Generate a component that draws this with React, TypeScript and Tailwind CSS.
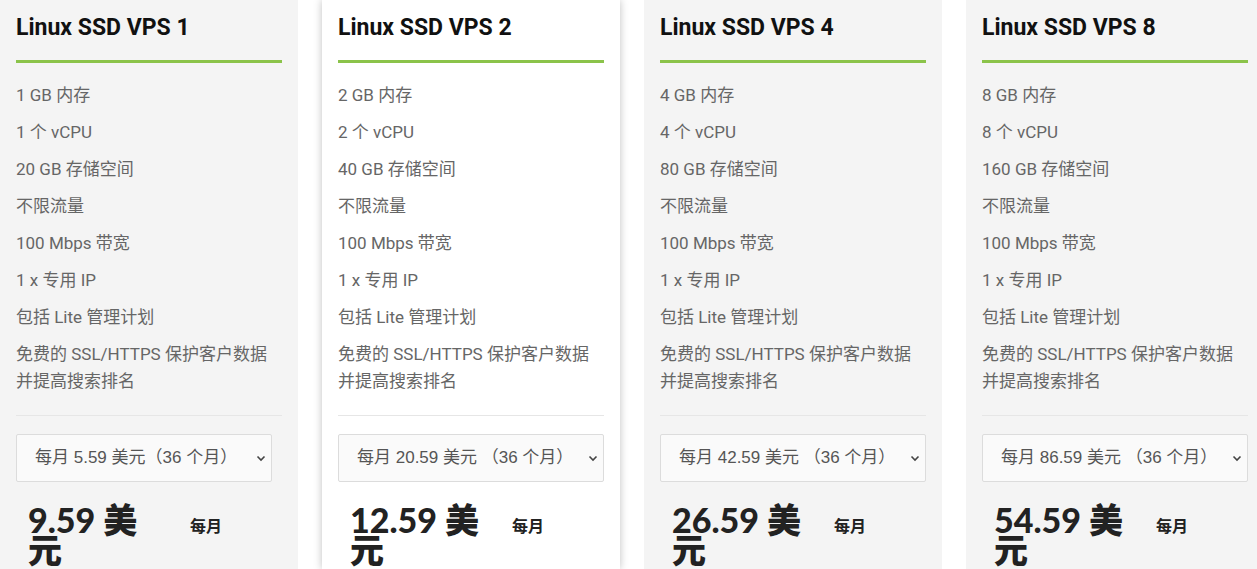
import React from 'react';

interface Plan {
  name: string;
  ram: string;
  cpu: string;
  disk: string;
  term: string;
  termWidth: string;
  price: string;
  featured?: boolean;
}

const plans: Plan[] = [
  { name: 'Linux SSD VPS 1', ram: '1', cpu: '1', disk: '20', term: '每月 5.59 美元（36 个月）', termWidth: 'w-[256px]', price: '9.59' },
  { name: 'Linux SSD VPS 2', ram: '2', cpu: '2', disk: '40', term: '每月 20.59 美元 （36 个月）', termWidth: 'w-full', price: '12.59', featured: true },
  { name: 'Linux SSD VPS 4', ram: '4', cpu: '4', disk: '80', term: '每月 42.59 美元 （36 个月）', termWidth: 'w-full', price: '26.59' },
  { name: 'Linux SSD VPS 8', ram: '8', cpu: '8', disk: '160', term: '每月 86.59 美元 （36 个月）', termWidth: 'w-full', price: '54.59' },
];

const body = "font-['Roboto','Noto_Sans_CJK_SC',sans-serif]";

function PlanCard({ plan }: { plan: Plan }) {
  const features = [
    `${plan.ram} GB 内存`,
    `${plan.cpu} 个 vCPU`,
    `${plan.disk} GB 存储空间`,
    '不限流量',
    '100 Mbps 带宽',
    '1 x 专用 IP',
    '包括 Lite 管理计划',
    '免费的 SSL/HTTPS 保护客户数据并提高搜索排名',
  ];

  return (
    <div
      className={`w-[298px] shrink-0 px-4 pt-[13px] ${
        plan.featured ? 'bg-white shadow-[0_0_8px_rgba(0,0,0,0.25)]' : 'bg-[#f4f4f4]'
      }`}
    >
      {/* Title */}
      <h2 className={`${body} text-[23px] leading-[30px] font-bold text-[#111] pb-[17px] border-b-[3px] border-[#8bc34a]`}>
        {plan.name}
      </h2>

      {/* Features */}
      <ul className={`${body} mt-[19px] text-[17px] leading-[27px] text-[#666]`}>
        {features.map((f) => (
          <li key={f} className="mb-[10px]">
            {f}
          </li>
        ))}
      </ul>

      <div className="mt-[20px] border-t border-[#e6e6e6]" />

      {/* Term select */}
      <div
        className={`${plan.termWidth} mt-[18px] h-[48px] flex items-center justify-between pl-[18px] pr-[5px] border border-[#dcdcdc] rounded-[2px] bg-[#fafafa] font-['Liberation_Sans','Noto_Sans_CJK_SC',sans-serif] text-[17px] text-[#555]`}
      >
        <span className="whitespace-nowrap">{plan.term}</span>
        <svg width="10" height="10" viewBox="0 0 10 10" className="shrink-0">
          <path d="M1.5 3.5 L5 7 L8.5 3.5" fill="none" stroke="#444" strokeWidth="1.6" />
        </svg>
      </div>

      {/* Price */}
      <div className="mt-[23px] flex items-start pl-3">
        <div className="w-[135px] font-['Lato','Noto_Sans_CJK_SC',sans-serif] text-[34px] leading-[30px] font-black text-[#222]">
          {plan.price} 美元
        </div>
        <div className="ml-[27px] mt-[9px] font-['Lato','Noto_Sans_CJK_SC',sans-serif] text-[16px] font-bold text-[#222]">
          每月
        </div>
      </div>
    </div>
  );
}

export default function App() {
  return (
    <div className="w-[1257px] h-[569px] overflow-hidden bg-white flex gap-[24px]">
      {plans.map((p) => (
        <PlanCard key={p.name} plan={p} />
      ))}
    </div>
  );
}
